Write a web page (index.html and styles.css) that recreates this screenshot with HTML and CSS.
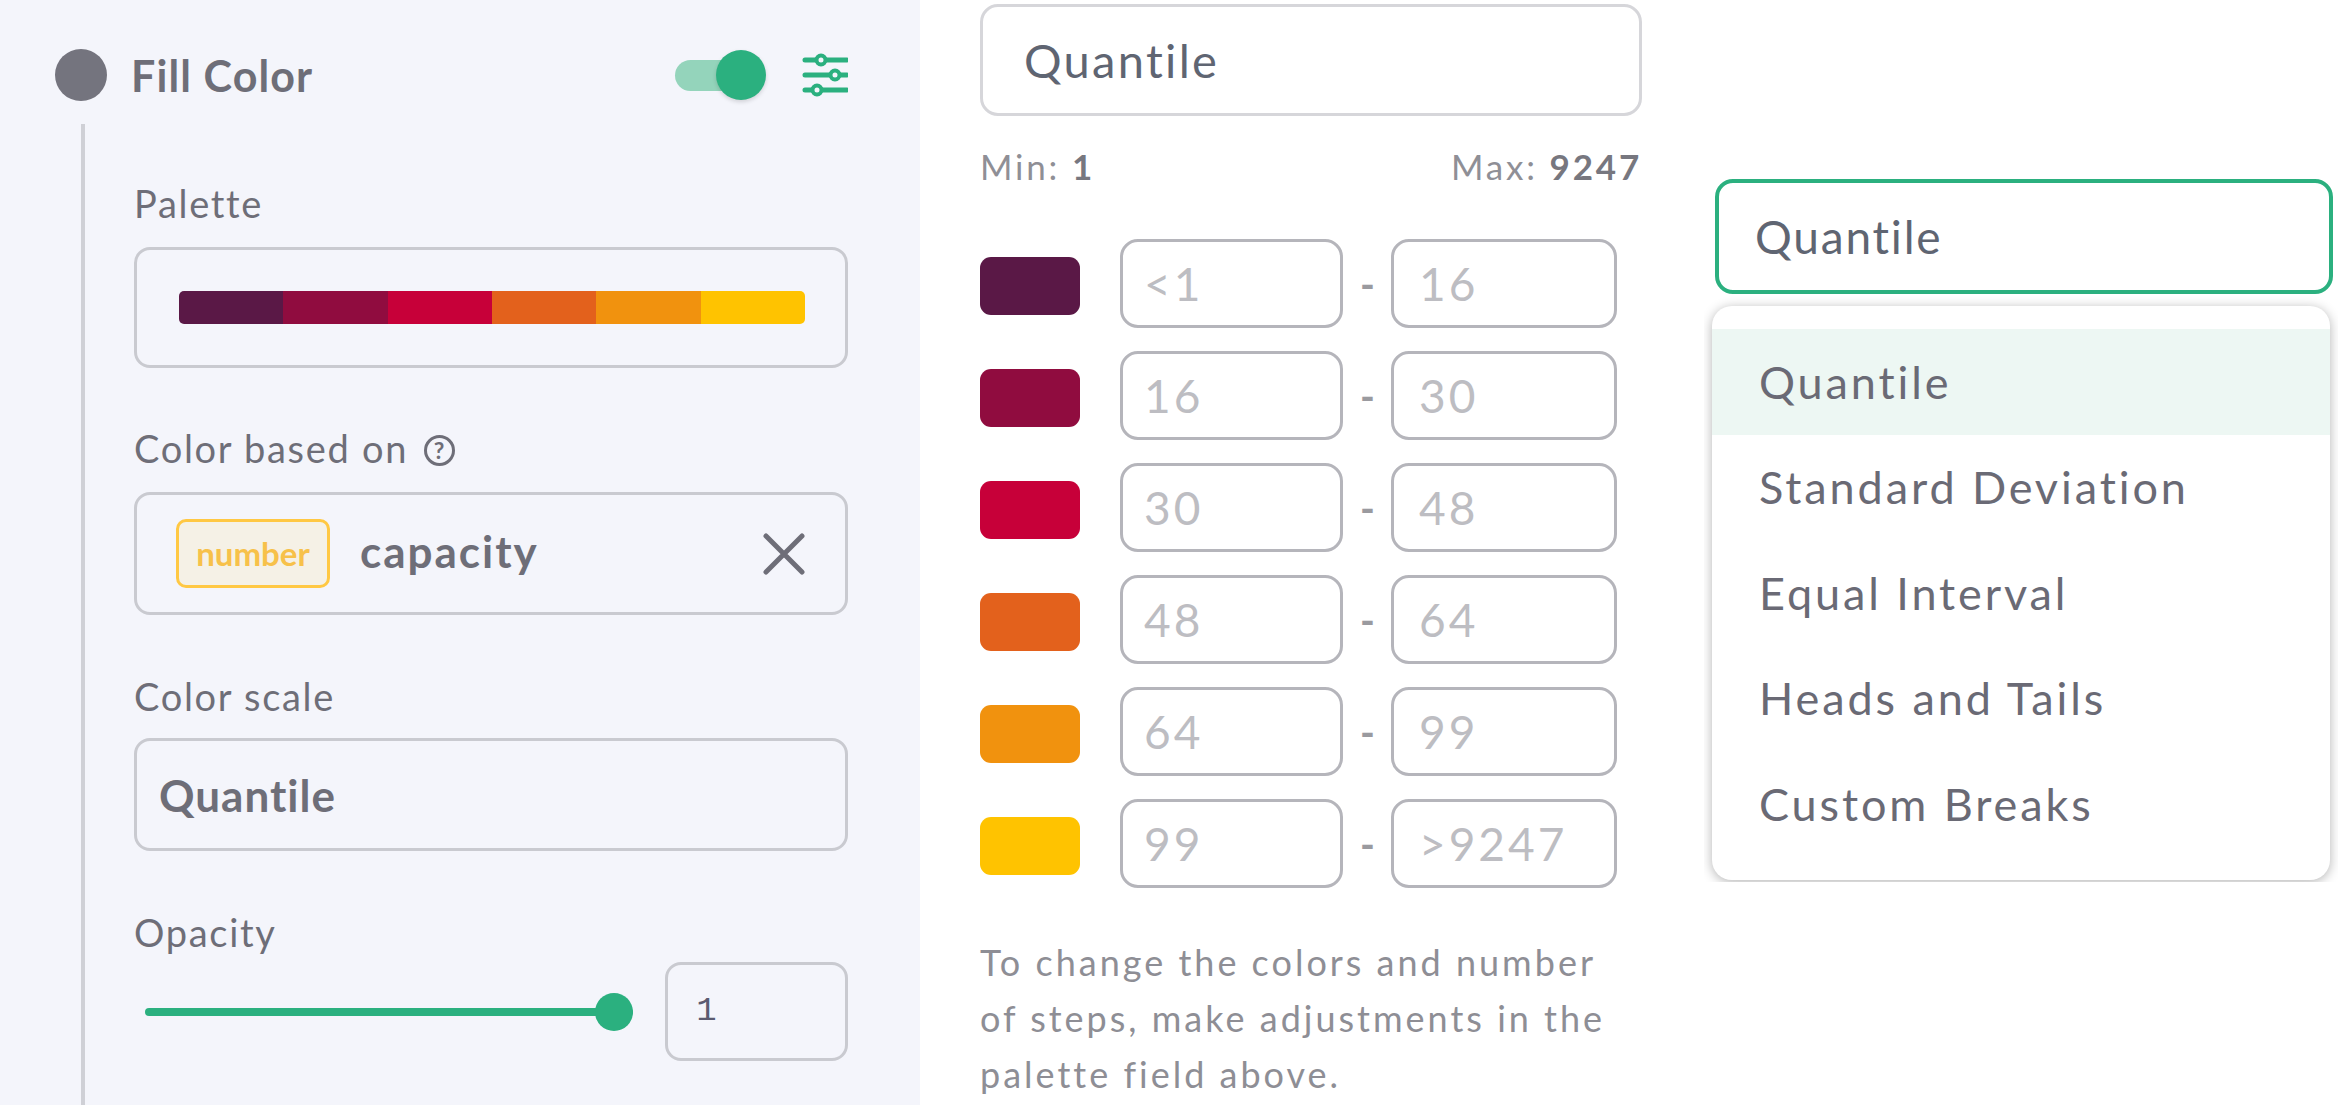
FILE: index.html
```html
<!DOCTYPE html>
<html lang="en">
<head>
    <meta charset="UTF-8">
    <title>Fill Color scale</title>
    <link rel="stylesheet" href="styles.css">
</head>
<body>

<aside class="sidebar">
    <div class="layer-head">
        <span class="layer-dot"></span>
        <span class="layer-title">Fill Color</span>
        <span class="toggle"><span class="toggle-knob"></span></span>
        <svg class="sliders-icon" width="46" height="44" viewBox="0 0 46 44" fill="none" stroke="#2bb07f" stroke-width="5" stroke-linecap="round">
            <path d="M3 7h42M3 22h42M3 37h42"/>
            <circle cx="19" cy="7" r="4.5" fill="#f4f5fb" stroke-width="4"/>
            <circle cx="33" cy="22" r="4.5" fill="#f4f5fb" stroke-width="4"/>
            <circle cx="15" cy="37" r="4.5" fill="#f4f5fb" stroke-width="4"/>
        </svg>
    </div>

    <div class="layer-body">
        <label class="field-label">Palette</label>
        <div class="box palette-box">
            <div class="palette">
                <span class="c1"></span><span class="c2"></span><span class="c3"></span>
                <span class="c4"></span><span class="c5"></span><span class="c6"></span>
            </div>
        </div>

        <label class="field-label based-label">Color based on <span class="help">?</span></label>
        <div class="box column-box">
            <span class="type-badge">number</span>
            <span class="column-name">capacity</span>
            <svg class="clear-icon" width="42" height="42" viewBox="0 0 42 42" stroke="#6e6e78" stroke-width="5" stroke-linecap="round">
                <path d="M3 3l36 36M39 3L3 39"/>
            </svg>
        </div>

        <label class="field-label scale-label">Color scale</label>
        <div class="box scale-box">Quantile</div>

        <label class="field-label opacity-label">Opacity</label>
        <div class="opacity-row">
            <div class="slider"><span class="slider-knob"></span></div>
            <div class="box opacity-input">1</div>
        </div>
    </div>
</aside>

<main class="steps">
    <div class="steps-select">Quantile</div>
    <div class="min-max">
        <span>Min: <b>1</b></span>
        <span>Max: <b>9247</b></span>
    </div>

    <div class="step-list">
        <div class="step">
            <span class="swatch c1"></span>
            <div class="step-input">&lt;1</div><span class="dash">-</span><div class="step-input wide">16</div>
        </div>
        <div class="step">
            <span class="swatch c2"></span>
            <div class="step-input">16</div><span class="dash">-</span><div class="step-input wide">30</div>
        </div>
        <div class="step">
            <span class="swatch c3"></span>
            <div class="step-input">30</div><span class="dash">-</span><div class="step-input wide">48</div>
        </div>
        <div class="step">
            <span class="swatch c4"></span>
            <div class="step-input">48</div><span class="dash">-</span><div class="step-input wide">64</div>
        </div>
        <div class="step">
            <span class="swatch c5"></span>
            <div class="step-input">64</div><span class="dash">-</span><div class="step-input wide">99</div>
        </div>
        <div class="step">
            <span class="swatch c6"></span>
            <div class="step-input">99</div><span class="dash">-</span><div class="step-input wide">&gt;9247</div>
        </div>
    </div>

    <p class="note">To change the colors and number<br>of steps, make adjustments in the<br>palette field above.</p>
</main>

<section class="picker">
    <div class="picker-select">Quantile</div>
    <ul class="menu">
        <li class="active">Quantile</li>
        <li>Standard Deviation</li>
        <li>Equal Interval</li>
        <li>Heads and Tails</li>
        <li>Custom Breaks</li>
    </ul>
</section>

</body>
</html>
```

FILE: styles.css
```css
* {
    box-sizing: border-box;
}

html, body {
    margin: 0;
    height: 100%;
}

body {
    display: flex;
    align-items: flex-start;
    width: 2338px;
    height: 1105px;
    overflow: hidden;
    background: #fff;
    font-family: 'Lato', sans-serif;
    color: #6a6a75;
}

/* swatch colours, shared by the palette bar and the step rows */
.c1 { background: #5a1846; }
.c2 { background: #900c3f; }
.c3 { background: #c70039; }
.c4 { background: #e3611c; }
.c5 { background: #f1920e; }
.c6 { background: #ffc300; }

/* left panel */
.sidebar {
    display: flex;
    flex-direction: column;
    flex: none;
    width: 920px;
    height: 1105px;
    padding: 49px 72px 0 55px;
    background: #f4f5fb;
}

.layer-head {
    display: flex;
    align-items: center;
    height: 52px;
}

.layer-dot {
    width: 52px;
    height: 52px;
    border-radius: 50%;
    background: #74747e;
}

.layer-title {
    flex: 1;
    margin-left: 24px;
    font-size: 43px;
    font-weight: 700;
    letter-spacing: 1.1px;
    color: #6e6e78;
}

.toggle {
    position: relative;
    width: 91px;
    height: 31px;
    border-radius: 16px 0 0 16px;
    background: linear-gradient(to right, #94d4bb 60px, transparent 60px);
}

.toggle-knob {
    position: absolute;
    right: 0;
    top: -10px;
    width: 50px;
    height: 50px;
    border-radius: 50%;
    background: #2bb07f;
    box-shadow: 0 2px 4px rgba(0, 0, 0, 0.15);
}

.sliders-icon {
    margin-left: 36px;
}

.layer-body {
    flex: 1;
    margin: 23px 0 0 26px;
    padding: 59px 0 0 49px;
    border-left: 4px solid #cfd0d6;
}

.field-label {
    display: block;
    height: 40px;
    line-height: 40px;
    margin-bottom: 24px;
    font-size: 38px;
    letter-spacing: 1.7px;
    color: #6e6e78;
}

.based-label {
    margin-top: 60px;
}

.scale-label {
    margin-top: 61px;
    margin-bottom: 22px;
}

.opacity-label {
    margin-top: 61px;
    margin-bottom: 10px;
}

.help {
    display: inline-block;
    width: 31px;
    height: 31px;
    margin-left: 4px;
    border: 3px solid #6e6e78;
    border-radius: 50%;
    font-size: 23px;
    font-weight: 700;
    line-height: 25px;
    letter-spacing: 0;
    text-align: center;
    vertical-align: 4px;
}

.box {
    border: 3px solid #c9cad0;
    border-radius: 16px;
}

.palette-box {
    height: 121px;
    padding: 41px 40px 0 42px;
}

.palette {
    display: flex;
    height: 33px;
    border-radius: 5px;
    overflow: hidden;
}

.palette span {
    flex: 1;
}

.column-box {
    display: flex;
    align-items: center;
    height: 123px;
    padding: 0 40px 0 39px;
}

.type-badge {
    display: flex;
    align-items: center;
    justify-content: center;
    width: 154px;
    height: 69px;
    padding-bottom: 2px;
    border: 3px solid #ffc843;
    border-radius: 10px;
    background: #f5f1e6;
    font-size: 33px;
    font-weight: 700;
    color: #f7c14a;
}

.column-name {
    flex: 1;
    margin: 0 0 5px 30px;
    font-size: 44px;
    font-weight: 700;
    letter-spacing: 2px;
    color: #6e6e78;
}

.scale-box {
    display: flex;
    align-items: center;
    height: 113px;
    padding-left: 22px;
    font-size: 44px;
    font-weight: 700;
    letter-spacing: 1px;
    color: #6e6e78;
}

.opacity-row {
    display: flex;
    align-items: center;
    padding-left: 11px;
}

.slider {
    position: relative;
    width: 489px;
    height: 8px;
    margin-right: 32px;
    border-radius: 4px;
    background: #2bb07f;
}

.slider-knob {
    position: absolute;
    right: 0;
    top: -15px;
    width: 38px;
    height: 38px;
    border-radius: 50%;
    background: #2bb07f;
}

.opacity-input {
    width: 183px;
    height: 99px;
    padding: 27px 0 0 28px;
    font-family: 'Liberation Mono', monospace;
    font-size: 34px;
    color: #5b5b70;
}

/* middle column */
.steps {
    flex: none;
    width: 662px;
    margin-left: 60px;
    padding-top: 4px;
}

.steps-select {
    display: flex;
    align-items: center;
    height: 112px;
    padding-left: 41px;
    border: 3px solid #d6d6da;
    border-radius: 18px;
    font-size: 47px;
    letter-spacing: 2.3px;
    color: #5f6572;
}

.min-max {
    display: flex;
    justify-content: space-between;
    height: 40px;
    line-height: 40px;
    margin-top: 30px;
    font-size: 35px;
    letter-spacing: 2.8px;
    color: #8f8f96;
}

.min-max b {
    color: #77777f;
}

.step-list {
    display: flex;
    flex-direction: column;
    gap: 23px;
    margin-top: 53px;
}

.step {
    display: flex;
    align-items: center;
}

.swatch {
    width: 100px;
    height: 58px;
    margin: 5px 40px 0 0;
    border-radius: 11px;
}

.step-input {
    display: flex;
    align-items: center;
    width: 223px;
    height: 89px;
    padding-left: 21px;
    border: 3px solid #b5b5bb;
    border-radius: 18px;
    font-size: 46px;
    letter-spacing: 3px;
    color: #bdbdc2;
}

.step-input.wide {
    width: 226px;
    padding-left: 25px;
}

.dash {
    width: 48px;
    padding-left: 1px;
    font-size: 40px;
    font-weight: 700;
    text-align: center;
    color: #9a9a9f;
}

.note {
    margin: 46px 0 0;
    font-size: 36px;
    line-height: 56px;
    letter-spacing: 3px;
    white-space: nowrap;
    color: #8e8e95;
}

/* open dropdown on the right */
.picker {
    flex: none;
    width: 634px;
    height: 882px;
    margin-left: 62px;
    padding: 179px 8px 0 8px;
    overflow: hidden;
}

.picker-select {
    display: flex;
    align-items: center;
    width: 618px;
    height: 115px;
    margin-left: 3px;
    padding-left: 36px;
    border: 4px solid #2bb07f;
    border-radius: 18px;
    font-size: 46px;
    letter-spacing: 1.8px;
    color: #5f6572;
}

.menu {
    width: 618px;
    height: 574px;
    margin: 12px 0 0;
    padding: 23px 0;
    list-style: none;
    border-radius: 20px;
    box-shadow: 0 2px 12px rgba(0, 0, 0, 0.3);
    font-size: 45px;
    letter-spacing: 2.9px;
    color: #6a6a75;
}

.menu li {
    display: flex;
    align-items: center;
    height: 105.5px;
    padding-left: 47px;
}

.menu li.active {
    background: #edf7f3;
}
```
